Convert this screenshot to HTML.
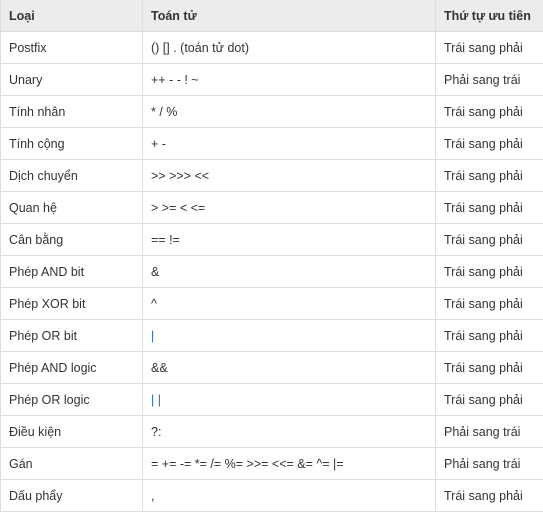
<!DOCTYPE html>
<html><head><style>
body{margin:0;background:#fff;font-family:"Liberation Sans",sans-serif;}
table{border-collapse:collapse;width:543px;table-layout:fixed;font-size:12.5px;color:#333;}
td,th{border:1px solid #ddd;height:31px;padding:0 0 0 8px;text-align:left;white-space:nowrap;overflow:hidden;}
th{background:#ececec;font-weight:bold;border-top:none;}
.b{color:#2a6ab8;}
</style></head><body>
<table>
<colgroup><col style="width:142px"><col style="width:293px"><col style="width:108px"></colgroup>
<tr><th>Loại</th><th>Toán tử</th><th>Thứ tự ưu tiên</th></tr>
<tr><td>Postfix</td><td>() [] . (toán tử dot)</td><td>Trái sang phải</td></tr>
<tr><td>Unary</td><td>++ - - ! ~</td><td>Phải sang trái</td></tr>
<tr><td>Tính nhân</td><td>* / %</td><td>Trái sang phải</td></tr>
<tr><td>Tính cộng</td><td>+ -</td><td>Trái sang phải</td></tr>
<tr><td>Dịch chuyển</td><td>&gt;&gt; &gt;&gt;&gt; &lt;&lt;</td><td>Trái sang phải</td></tr>
<tr><td>Quan hệ</td><td>&gt; &gt;= &lt; &lt;=</td><td>Trái sang phải</td></tr>
<tr><td>Cân bằng</td><td>== !=</td><td>Trái sang phải</td></tr>
<tr><td>Phép AND bit</td><td>&amp;</td><td>Trái sang phải</td></tr>
<tr><td>Phép XOR bit</td><td>^</td><td>Trái sang phải</td></tr>
<tr><td>Phép OR bit</td><td class="b">|</td><td>Trái sang phải</td></tr>
<tr><td>Phép AND logic</td><td>&amp;&amp;</td><td>Trái sang phải</td></tr>
<tr><td>Phép OR logic</td><td class="b">| |</td><td>Trái sang phải</td></tr>
<tr><td>Điều kiện</td><td>?:</td><td>Phải sang trái</td></tr>
<tr><td>Gán</td><td>= += -= *= /= %= &gt;&gt;= &lt;&lt;= &amp;= ^= |=</td><td>Phải sang trái</td></tr>
<tr><td>Dấu phẩy</td><td>,</td><td>Trái sang phải</td></tr>
</table>
</body></html>
